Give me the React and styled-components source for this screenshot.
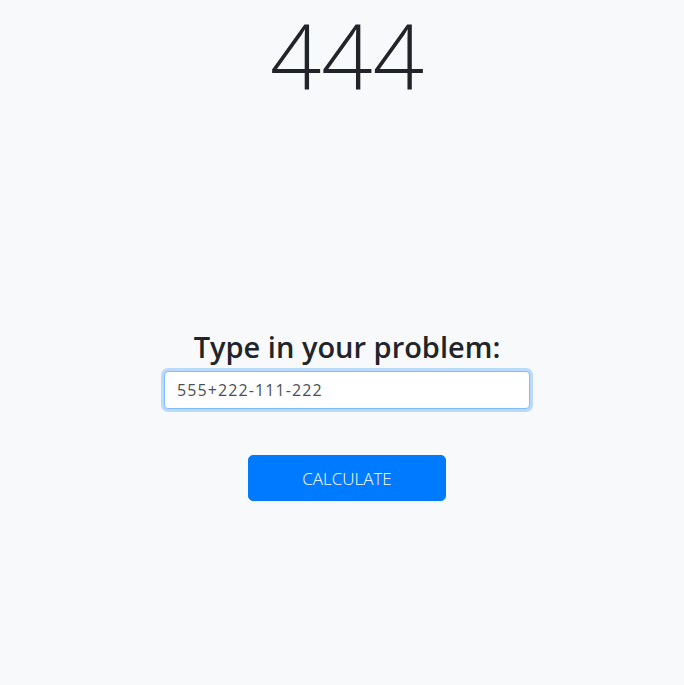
import React from 'react';
import styled, { createGlobalStyle } from 'styled-components';

const GlobalStyle = createGlobalStyle`
  html, body {
    margin: 0;
    padding: 0;
    background: #f8f9fa;
    font-family: "Open Sans", "Noto Sans", sans-serif;
    color: #212529;
  }
`;

const Page = styled.main`
  min-height: 685px;
  padding-left: 10px;
  display: flex;
  flex-direction: column;
  align-items: center;
`;

const Result = styled.h1`
  margin: 0;
  font-size: 90px;
  font-weight: 300;
  line-height: 1.23;
`;

const Form = styled.form`
  margin-top: 219px;
  display: flex;
  flex-direction: column;
  align-items: center;
`;

const Label = styled.h3`
  margin: 0 0 7px;
  font-size: 29px;
  font-weight: 600;
  line-height: 1.2;
`;

const ProblemInput = styled.input`
  box-sizing: border-box;
  width: 366px;
  height: 38px;
  padding: 6px 12px;
  font-family: inherit;
  font-size: 16px;
  letter-spacing: 1.1px;
  color: #495057;
  caret-color: #212529;
  background: #fff;
  border: 1px solid #80bdff;
  border-radius: 4px;
  outline: 0;
  box-shadow: 0 0 0 3px rgba(0, 123, 255, 0.25);
`;

const Button = styled.button`
  margin-top: 46px;
  width: 198px;
  height: 46px;
  font-family: inherit;
  font-size: 17px;
  font-weight: 300;
  color: #fff;
  background: #007bff;
  border: 1px solid #007bff;
  border-radius: 5px;
  cursor: pointer;
`;

export default function App() {
  const ref = React.useRef(null);
  React.useEffect(() => {
    const el = ref.current;
    if (el) {
      el.focus();
      el.setSelectionRange(el.value.length, el.value.length);
    }
  }, []);

  return (
    <>
      <GlobalStyle />
      <Page>
        <Result>444</Result>
        <Form onSubmit={(e) => e.preventDefault()}>
          <Label>Type in your problem:</Label>
          <ProblemInput ref={ref} defaultValue="555+222-111-222" />
          <Button type="submit">CALCULATE</Button>
        </Form>
      </Page>
    </>
  );
}
